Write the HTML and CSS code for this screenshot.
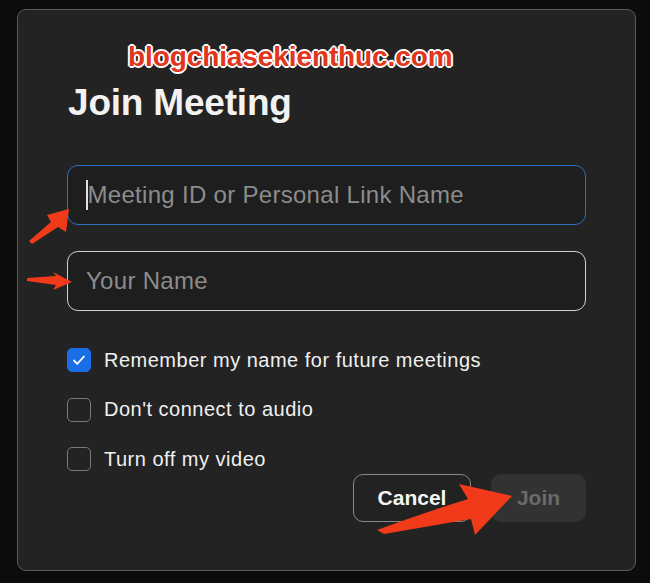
FILE: index.html
```html
<!DOCTYPE html>
<html>
<head>
<meta charset="utf-8">
<link rel="stylesheet" href="styles.css">
</head>
<body>
<div class="dialog">
  <div class="watermark">blogchiasekienthuc.com</div>
  <h1 class="title">Join Meeting</h1>
  <div class="field focused"><span class="caret"></span><span class="ph">Meeting ID or Personal Link Name</span></div>
  <div class="field"><span class="ph">Your Name</span></div>
  <div class="options">
    <label class="opt"><span class="box checked"><svg viewBox="0 0 24 24" width="24" height="24"><path d="M7 12.5l3.2 3.3L17 8.5" fill="none" stroke="#fff" stroke-width="1.8" stroke-linecap="round" stroke-linejoin="round"/></svg></span>Remember my name for future meetings</label>
    <label class="opt"><span class="box"></span>Don't connect to audio</label>
    <label class="opt"><span class="box"></span>Turn off my video</label>
  </div>
  <div class="actions">
    <button class="btn cancel">Cancel</button>
    <button class="btn join">Join</button>
  </div>
  <svg class="arrows" width="650" height="583" viewBox="0 0 650 583">
    <path d="M29 241 L51 222 L47 215 L69 209 L66 232 L58 227 L32 244 Z" fill="#f03a1a"/>
    <path d="M27 278 L56 276 L53 272 L72 282 L53 290 L56 285 L27 281 Z" fill="#f03a1a"/>
    <path d="M377 530 Q420 514 468 499 L459 484 L512 496 L475 535 L471 519 Q430 526 384 534 Z" fill="#f03a1a"/>
  </svg>
</div>
</body>
</html>
```
FILE: styles.css
```css
html, body { margin: 0; padding: 0; }
body {
  width: 650px;
  height: 583px;
  background: #0c0c0c;
  font-family: "Liberation Sans", Arial, sans-serif;
  padding: 9px 0 0 17px;
  box-sizing: border-box;
}
.dialog {
  width: 619px;
  height: 562px;
  box-sizing: border-box;
  border: 1px solid #5a5a5a;
  border-radius: 9px;
  background: #232323;
  padding: 30px 49px 0 49px;
  display: flex;
  flex-direction: column;
}
.watermark {
  margin-left: 61px;
  height: 34px;
  font-family: "Liberation Sans Narrow", "Liberation Sans", Arial, sans-serif;
  font-weight: bold;
  font-size: 28px;
  letter-spacing: -0.1px;
  color: #e2361c;
  text-shadow: -1px -1px 0 #fff, 1px -1px 0 #fff, -1px 1px 0 #fff, 1px 1px 0 #fff, 0 2px 0 #fff, 2px 0 0 #fff, -2px 0 0 #fff, 0 -2px 0 #fff;
  line-height: 34px;
}
.title {
  margin: 9px 0 0 1px;
  font-size: 37px;
  font-weight: bold;
  color: #f2f2f2;
  line-height: 40px;
  letter-spacing: -0.2px;
}
.field {
  margin-top: 42px;
  height: 60px;
  box-sizing: border-box;
  border: 1.5px solid #d0d0d0;
  border-radius: 11px;
  background: #1e1e1e;
  display: flex;
  align-items: center;
  padding-left: 18px;
  flex: none;
}
.field + .field { margin-top: 26px; }
.field.focused { border-color: #2c6fc6; }
.caret { width: 1.5px; height: 30px; background: #e0e0e0; margin-right: 0; }
.ph { font-size: 24px; color: #8c8c8c; letter-spacing: 0.3px; }
.options {
  margin-top: 37px;
  display: flex;
  flex-direction: column;
  gap: 25.5px;
}
.opt {
  display: flex;
  align-items: center;
  gap: 13px;
  font-size: 20px;
  letter-spacing: 0.5px;
  color: #f0f0f0;
  height: 24px;
}
.box {
  width: 24px;
  height: 24px;
  box-sizing: border-box;
  border: 1.5px solid #7a7a7a;
  border-radius: 5px;
  flex: none;
}
.box.checked { background: #1a6fe8; border-color: #1a6fe8; }
.box.checked svg { display: block; margin: -1.5px; }
.actions {
  margin-top: 3px;
  display: flex;
  justify-content: flex-end;
  gap: 20px;
}
.btn {
  height: 48px;
  border-radius: 10px;
  font-family: "Liberation Sans", Arial, sans-serif;
  font-weight: bold;
  font-size: 21px;
  box-sizing: border-box;
}
.cancel {
  width: 118px;
  background: #222;
  border: 1.5px solid #8a8a8a;
  color: #f5f5f5;
}
.join {
  width: 95px;
  background: #323232;
  border: none;
  color: #6a6a6a;
}
.arrows { position: absolute; left: 0; top: 0; pointer-events: none; }
```
